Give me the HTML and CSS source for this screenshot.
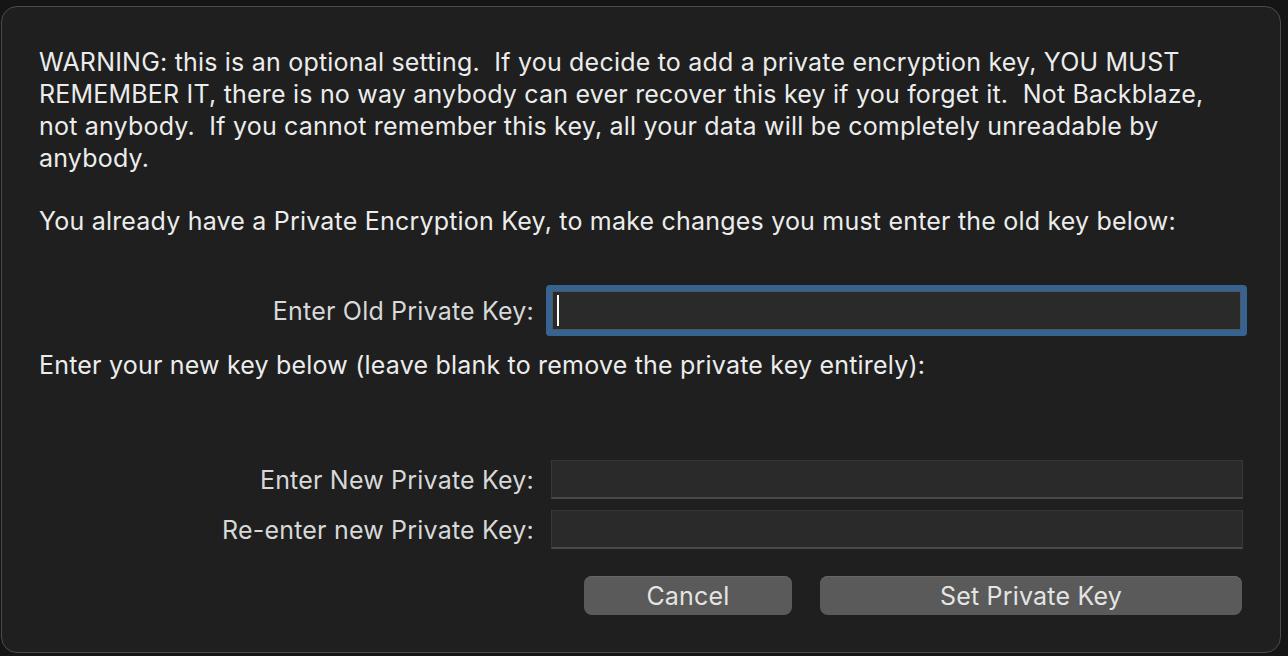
FILE: index.html
```html
<!DOCTYPE html>
<html>
<head>
<meta charset="utf-8">
<link rel="stylesheet" href="styles.css">
</head>
<body>
<div class="window">
  <p class="warning">WARNING: this is an optional setting.&nbsp; If you decide to add a private encryption key, YOU MUST<br>REMEMBER IT, there is no way anybody can ever recover this key if you forget it.&nbsp; Not Backblaze,<br>not anybody.&nbsp; If you cannot remember this key, all your data will be completely unreadable by<br>anybody.</p>
  <p class="note">You already have a Private Encryption Key, to make changes you must enter the old key below:</p>
  <div class="form-row row-old">
    <label class="label">Enter Old Private Key:</label>
    <div class="field focused"><span class="caret"></span></div>
  </div>
  <p class="note note-new">Enter your new key below (leave blank to remove the private key entirely):</p>
  <div class="form-row row-new">
    <label class="label">Enter New Private Key:</label>
    <div class="field"></div>
  </div>
  <div class="form-row row-re">
    <label class="label">Re-enter new Private Key:</label>
    <div class="field"></div>
  </div>
  <div class="buttons">
    <button class="btn btn-cancel">Cancel</button>
    <button class="btn btn-set">Set Private Key</button>
  </div>
</div>
</body>
</html>
```

FILE: styles.css
```css
html, body {
  margin: 0;
  padding: 0;
  background: #151515;
  width: 1288px;
  height: 656px;
  overflow: hidden;
}

body {
  font-family: Inter, "Noto Sans", "Liberation Sans", sans-serif;
  font-size: 25px;
  letter-spacing: 0.2px;
  color: #ececec;
}

.window {
  box-sizing: border-box;
  margin: 6px 0 0 1px;
  width: 1280px;
  height: 647px;
  border: 1px solid #4a4b4a;
  border-radius: 16px;
  background: #1e1f1e;
  padding: 39px 37px 0 37px;
}

p {
  margin: 0;
  line-height: 32px;
  white-space: nowrap;
}

.note {
  margin-top: 31px;
}

.form-row {
  display: grid;
  grid-template-columns: 495px 692px;
  column-gap: 17px;
  align-items: center;
}

.row-old {
  margin-top: 54px;
  grid-template-columns: 495px 689px;
  column-gap: 18px;
}

.note-new {
  margin-top: 19px;
}

.row-new {
  margin-top: 79px;
}

.row-re {
  margin-top: 11px;
}

.label {
  text-align: right;
  color: #d8d8d8;
  white-space: nowrap;
}

.field {
  box-sizing: border-box;
  height: 39px;
  background: #292a29;
  border: 1px solid #363736;
  border-bottom: 2px solid #484948;
  position: relative;
}

.field.focused {
  border: 1px solid #4f5660;
  box-shadow: 0 0 0 6px #36638f;
  border-radius: 1px;
}

.caret {
  position: absolute;
  left: 4px;
  top: 3px;
  width: 2px;
  height: 31px;
  background: #ffffff;
}

.buttons {
  margin-top: 27px;
  display: flex;
  justify-content: flex-end;
  gap: 28px;
  padding-right: 1px;
}

.btn {
  height: 39px;
  border: none;
  border-radius: 8px;
  background: #595a59;
  color: #e4e4e4;
  font-family: Inter, "Noto Sans", "Liberation Sans", sans-serif;
  font-size: 25px;
  letter-spacing: 0.2px;
  padding: 0;
  box-shadow: inset 0 1px 0 #666766;
}

.btn-cancel {
  width: 208px;
}

.btn-set {
  width: 422px;
}
```
